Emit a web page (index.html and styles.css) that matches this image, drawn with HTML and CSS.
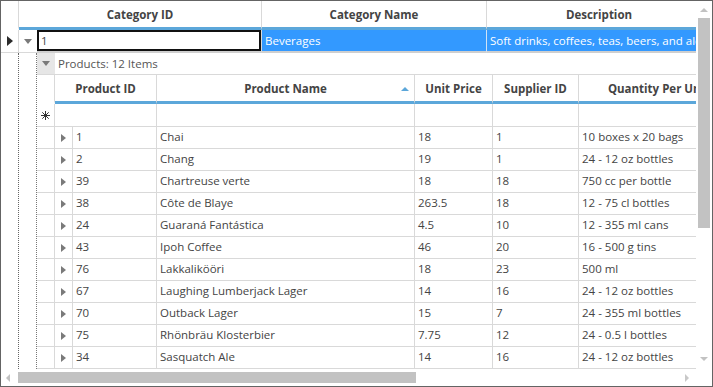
FILE: index.html
```html
<!DOCTYPE html>
<html>
<head>
<meta charset="utf-8">
<link rel="stylesheet" href="styles.css">
</head>
<body>
<div class="window">
  <div class="main">
    <div class="hdr">
      <div class="hc rh"></div>
      <div class="hc">Category ID</div>
      <div class="hc">Category Name</div>
      <div class="hc">Description</div>
    </div>
    <div class="mrow">
      <div class="rh"><span class="tri-cur"></span></div>
      <div class="ex"><span class="tri-down"></span></div>
      <div class="cur">1</div>
      <div class="sel">Beverages</div>
      <div class="sel">Soft drinks, coffees, teas, beers, and ales</div>
    </div>
    <div class="tree">
      <div class="tree-rh"></div>
      <div class="tree-ex"></div>
      <div class="detail">
        <div class="group">
          <div class="gex"><span class="tri-down"></span></div>
          <div class="gtext">Products: 12 Items</div>
        </div>
        <div class="igrid">
          <div class="ih irh"></div>
          <div class="ih span2">Product ID</div>
          <div class="ih sorted">Product Name<span class="sort"></span></div>
          <div class="ih">Unit Price</div>
          <div class="ih">Supplier ID</div>
          <div class="ih">Quantity Per Unit</div>

          <div class="c nr irow-rh"><svg class="star" width="9" height="9" viewBox="0 0 9 9"><path d="M4.5 0V9M0 4.5H9M1.3 1.3L7.7 7.7M7.7 1.3L1.3 7.7" stroke="#333" stroke-width="1" fill="none"/></svg></div>
          <div class="c nr span2"></div>
          <div class="c nr"></div>
          <div class="c nr"></div>
          <div class="c nr"></div>
          <div class="c nr"></div>

          <div class="c"></div><div class="c x"><span class="tri-r"></span></div><div class="c">1</div><div class="c">Chai</div><div class="c">18</div><div class="c">1</div><div class="c">10 boxes x 20 bags</div>
          <div class="c"></div><div class="c x"><span class="tri-r"></span></div><div class="c">2</div><div class="c">Chang</div><div class="c">19</div><div class="c">1</div><div class="c">24 - 12 oz bottles</div>
          <div class="c"></div><div class="c x"><span class="tri-r"></span></div><div class="c">39</div><div class="c">Chartreuse verte</div><div class="c">18</div><div class="c">18</div><div class="c">750 cc per bottle</div>
          <div class="c"></div><div class="c x"><span class="tri-r"></span></div><div class="c">38</div><div class="c">Côte de Blaye</div><div class="c">263.5</div><div class="c">18</div><div class="c">12 - 75 cl bottles</div>
          <div class="c"></div><div class="c x"><span class="tri-r"></span></div><div class="c">24</div><div class="c">Guaraná Fantástica</div><div class="c">4.5</div><div class="c">10</div><div class="c">12 - 355 ml cans</div>
          <div class="c"></div><div class="c x"><span class="tri-r"></span></div><div class="c">43</div><div class="c">Ipoh Coffee</div><div class="c">46</div><div class="c">20</div><div class="c">16 - 500 g tins</div>
          <div class="c"></div><div class="c x"><span class="tri-r"></span></div><div class="c">76</div><div class="c">Lakkalikööri</div><div class="c">18</div><div class="c">23</div><div class="c">500 ml</div>
          <div class="c"></div><div class="c x"><span class="tri-r"></span></div><div class="c">67</div><div class="c">Laughing Lumberjack Lager</div><div class="c">14</div><div class="c">16</div><div class="c">24 - 12 oz bottles</div>
          <div class="c"></div><div class="c x"><span class="tri-r"></span></div><div class="c">70</div><div class="c">Outback Lager</div><div class="c">15</div><div class="c">7</div><div class="c">24 - 355 ml bottles</div>
          <div class="c"></div><div class="c x"><span class="tri-r"></span></div><div class="c">75</div><div class="c">Rhönbräu Klosterbier</div><div class="c">7.75</div><div class="c">12</div><div class="c">24 - 0.5 l bottles</div>
          <div class="c"></div><div class="c x"><span class="tri-r"></span></div><div class="c">34</div><div class="c">Sasquatch Ale</div><div class="c">14</div><div class="c">16</div><div class="c">24 - 12 oz bottles</div>
        </div>
      </div>
    </div>
  </div>
  <div class="vs">
    <span class="arr-up"></span>
    <div class="vthumb"></div>
    <span class="arr-down"></span>
  </div>
  <div class="hs">
    <span class="arr-left"></span>
    <div class="hthumb"></div>
    <span class="arr-right"></span>
  </div>
  <div class="corner"></div>
</div>
</body>
</html>
```

FILE: styles.css
```css
* { box-sizing: border-box; margin: 0; padding: 0; }
body {
  margin: 0;
  background: #fff;
  font-family: "Open Sans", "Noto Sans", sans-serif;
  font-size: 11.5px;
  color: #444;
}
.window {
  width: 713px;
  height: 387px;
  border: 1px solid #646464;
  display: grid;
  grid-template-columns: 695px 16px;
  grid-template-rows: 368px 17px;
  overflow: hidden;
  background: #fff;
}
.main { overflow: hidden; display: flex; flex-direction: column; }

/* top header */
.hdr {
  display: grid;
  grid-template-columns: 18px 243px 225px 225px;
  height: 29px;
  flex: none;
}
.hc {
  border-right: 1px solid #d9d9d9;
  border-bottom: 3px solid #5ca7da;
  font-weight: bold;
  text-align: center;
  line-height: 27px;
  white-space: nowrap;
  overflow: hidden;
  color: #444;
}
.hc.rh { border-bottom-color: #fff; }

/* master row */
.mrow {
  display: grid;
  grid-template-columns: 18px 18px 225px 225px 225px;
  height: 23px;
  flex: none;
}
.mrow > div { white-space: nowrap; overflow: hidden; line-height: 20px; }
.mrow .rh {
  border-right: 1px solid #d9d9d9;
  border-bottom: 1px solid #d9d9d9;
  display: flex; align-items: center; padding-left: 6px;
}
.mrow .ex {
  border-bottom: 1px solid #d9d9d9;
  display: flex; align-items: center; justify-content: center;
}
.mrow .cur {
  border-right: 1px solid #d9d9d9;
  border-bottom: 2px solid #cfcfcf;
  box-shadow: inset 0 0 0 2px #111;
  padding-left: 4px;
  padding-top: 1px;
}
.mrow .sel {
  background: #3399ff;
  color: #fff;
  border-right: 1px solid #cfe2f5;
  border-bottom: 2px solid #cfcfcf;
  padding-left: 3px;
  padding-top: 1px;
}

.tri-cur {
  width: 0; height: 0;
  border-left: 6px solid #2b2b2b;
  border-top: 5px solid transparent;
  border-bottom: 5px solid transparent;
}
.tri-down {
  width: 0; height: 0;
  border-top: 5px solid #7a7a7a;
  border-left: 4.5px solid transparent;
  border-right: 4.5px solid transparent;
}
.tri-r {
  width: 0; height: 0;
  border-left: 5px solid #7a7a7a;
  border-top: 4.5px solid transparent;
  border-bottom: 4.5px solid transparent;
}

/* detail tree */
.tree { display: flex; flex: 1; min-height: 0; }
.tree-rh { width: 18px; flex: none; border-right: 1px dotted #666; }
.tree-ex { width: 17px; flex: none; }
.detail { flex: 1; min-width: 0; border-left: 1px dotted #777; overflow: hidden; }
.group {
  display: flex;
  height: 22px;
  border-bottom: 1px solid #d9d9d9;
}
.gex {
  width: 18px; flex: none;
  background: #e6e6e6;
  display: flex; align-items: center; justify-content: center;
}
.gtext { padding-left: 3px; line-height: 21px; color: #555; white-space: nowrap; }

.igrid {
  display: grid;
  grid-template-columns: 18px 18px 84px 258px 78px 86px 160px;
  grid-auto-rows: 22px;
  grid-template-rows: 29px 23px;
}
.ih {
  border-right: 1px solid #d9d9d9;
  border-bottom: 3px solid #5ca7da;
  font-weight: bold;
  text-align: center;
  line-height: 27px;
  white-space: nowrap;
  overflow: hidden;
  color: #444;
  position: relative;
}
.ih.irh { border-bottom-color: #fff; }
.span2 { grid-column: span 2; }
.sort {
  position: absolute;
  right: 5px; top: 12px;
  width: 0; height: 0;
  border-bottom: 4px solid #5ca7da;
  border-left: 4px solid transparent;
  border-right: 4px solid transparent;
}
.c {
  border-right: 1px solid #d9d9d9;
  border-bottom: 1px solid #d9d9d9;
  padding-left: 3px;
  line-height: 20px;
  white-space: nowrap;
  overflow: hidden;
  color: #444;
}
.c.x { display: flex; align-items: center; justify-content: center; padding-left: 0; }
.irow-rh { display: flex; align-items: center; justify-content: center; padding-left: 0; }

/* scrollbars */
.vs {
  display: flex; flex-direction: column; align-items: center;
  padding: 7px 0 8px;
}
.arr-up {
  width: 0; height: 0;
  border-bottom: 4px solid #c2c2c2;
  border-left: 4px solid transparent;
  border-right: 4px solid transparent;
}
.vthumb { width: 12px; height: 210px; background: #c2c2c2; margin-top: 6px; }
.arr-down {
  margin-top: auto;
  width: 0; height: 0;
  border-top: 4px solid #c2c2c2;
  border-left: 4px solid transparent;
  border-right: 4px solid transparent;
}
.hs {
  display: flex; align-items: center;
  padding-left: 5px;
  padding-right: 7px;
}
.arr-left {
  width: 0; height: 0;
  border-right: 4px solid #c2c2c2;
  border-top: 4px solid transparent;
  border-bottom: 4px solid transparent;
}
.hthumb { width: 398px; height: 11px; background: #c2c2c2; margin-left: 8px; }
.arr-right {
  margin-left: auto;
  width: 0; height: 0;
  border-left: 4px solid #c8c8c8;
  border-top: 4px solid transparent;
  border-bottom: 4px solid transparent;
}
.corner { background: #fff; }
```
